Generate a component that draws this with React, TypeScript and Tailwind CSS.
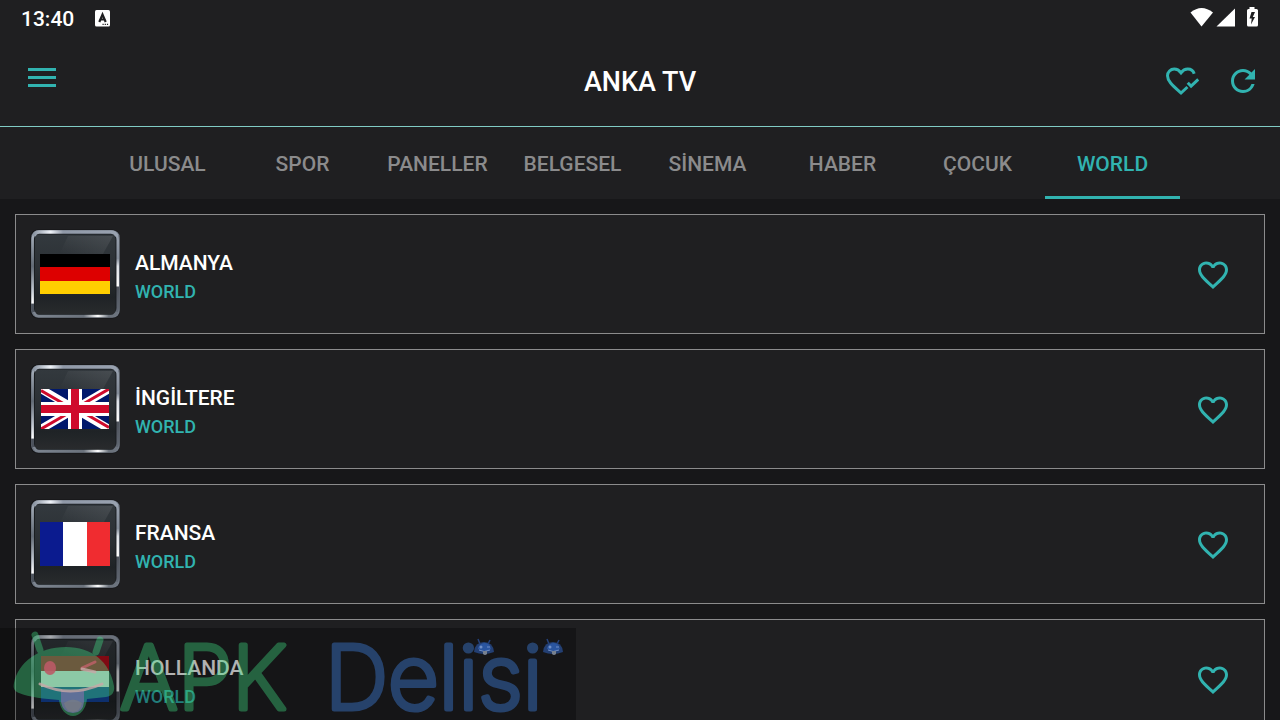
import { useId, useState } from 'react';
import type { ReactNode } from 'react';
import { MdFavorite, MdFavoriteBorder, MdRefresh } from 'react-icons/md';

type Country = 'de' | 'gb' | 'fr' | 'nl';

interface Channel {
  name: string;
  group: string;
  country: Country;
}

const TABS = ['ULUSAL', 'SPOR', 'PANELLER', 'BELGESEL', 'SİNEMA', 'HABER', 'ÇOCUK', 'WORLD'];

const CHANNELS: Channel[] = [
  { name: 'ALMANYA', group: 'WORLD', country: 'de' },
  { name: 'İNGİLTERE', group: 'WORLD', country: 'gb' },
  { name: 'FRANSA', group: 'WORLD', country: 'fr' },
  { name: 'HOLLANDA', group: 'WORLD', country: 'nl' },
];

const FLAGS: Record<Country, ReactNode> = {
  de: (
    <g shapeRendering="crispEdges">
      <path fill="#000" d="M10 25h70v13H10z" />
      <path fill="#dd0000" d="M10 38h70v14H10z" />
      <path fill="#ffce00" d="M10 52h70v13H10z" />
    </g>
  ),
  gb: (
    <svg x="11" y="25" width="68" height="40" viewBox="0 0 68 40">
      <path fill="#00186b" d="M0 0h68v40H0z" />
      <path stroke="#fff" strokeWidth="8" d="M0 0l68 40M68 0L0 40" />
      <path stroke="#cf0a2c" strokeWidth="3" d="M0 1.5l30 17.5M68 38.5L38 21M68 0L36 18.5M0 40l32-18.5" />
      <path stroke="#fff" strokeWidth="14" d="M34 0v40M0 20h68" />
      <path stroke="#cf0a2c" strokeWidth="8" d="M34 0v40M0 20h68" />
    </svg>
  ),
  fr: (
    <g shapeRendering="crispEdges">
      <path fill="#0b1b8f" d="M10 23h23v44H10z" />
      <path fill="#fff" d="M33 23h24v44H33z" />
      <path fill="#f02c30" d="M57 23h23v44H57z" />
    </g>
  ),
  nl: (
    <g shapeRendering="crispEdges">
      <path fill="#b80d1c" d="M11 22h68v15H11z" />
      <path fill="#fff" d="M11 37h68v16H11z" />
      <path fill="#14449c" d="M11 53h68v15H11z" />
    </g>
  ),
};

function ChannelLogo({ country }: { country: Country }) {
  const id = useId();

  return (
    <svg className="size-[90px] shrink-0" viewBox="0 0 90 90" fill="none" aria-hidden="true">
      <defs>
        <linearGradient id={`${id}-glass`} x1="0" y1="0" x2="0" y2="1">
          <stop offset="0" stopColor="#33393e" />
          <stop offset="0.5" stopColor="#2a2f33" />
          <stop offset="0.78" stopColor="#1f2326" />
          <stop offset="1" stopColor="#292b2d" />
        </linearGradient>
        <linearGradient id={`${id}-sheen`} x1="0" y1="1" x2="1" y2="0">
          <stop offset="0.3" stopColor="#fff" stopOpacity="0" />
          <stop offset="1" stopColor="#fff" stopOpacity="0.1" />
        </linearGradient>
        <linearGradient id={`${id}-top`} x1="0" x2="1">
          <stop offset="0" stopColor="#8b95a3" />
          <stop offset="0.2" stopColor="#f0f4fa" />
          <stop offset="0.35" stopColor="#9099a8" />
          <stop offset="1" stopColor="#99a2b0" />
        </linearGradient>
        <linearGradient id={`${id}-bottom`} x1="0" x2="1">
          <stop offset="0" stopColor="#7d8590" />
          <stop offset="0.6" stopColor="#6b727c" />
          <stop offset="0.77" stopColor="#fff" />
          <stop offset="0.9" stopColor="#6c737d" />
        </linearGradient>
        <linearGradient id={`${id}-left`} gradientUnits="userSpaceOnUse" x1="0" y1="6" x2="0" y2="84">
          <stop offset="0" stopColor="#a3acb8" />
          <stop offset="0.4" stopColor="#626b76" />
          <stop offset="0.7" stopColor="#c0c7d0" />
          <stop offset="0.87" stopColor="#fff" />
          <stop offset="0.89" stopColor="#4b515b" />
        </linearGradient>
        <linearGradient id={`${id}-right`} gradientUnits="userSpaceOnUse" x1="0" y1="6" x2="0" y2="84">
          <stop offset="0" stopColor="#99a2b0" />
          <stop offset="0.3" stopColor="#838c99" />
          <stop offset="0.4" stopColor="#e0e4ea" />
          <stop offset="0.65" stopColor="#fff" />
          <stop offset="0.67" stopColor="#4d525b" />
          <stop offset="1" stopColor="#606772" />
        </linearGradient>
      </defs>
      <rect x="0" y="0.500" width="90" height="89" rx="8" fill="#141517" />
      <rect x="2.500" y="2.500" width="86" height="85" rx="6" stroke="#6f7783" strokeWidth="2.500" />
      <rect x="4.500" y="5" width="81.500" height="80.500" rx="4" fill={`url(#${id}-glass)`} stroke="#191d20" />
      <path fill={`url(#${id}-sheen)`} d="M38 7h45l-18 32H23z" />
      <path stroke={`url(#${id}-left)`} strokeWidth="2.500" d="M6 4Q2.500 6 2.600 12V78Q2.500 83 6 86" />
      <path stroke={`url(#${id}-right)`} strokeWidth="2.500" d="M84 4Q88 6 87.700 12V78Q88 83 84 86" />
      <path stroke={`url(#${id}-top)`} strokeWidth="3.500" d="M4 7Q5 3 9 3H81Q85 3 87 7" />
      <path stroke={`url(#${id}-bottom)`} strokeWidth="2.500" d="M4 83Q5 87 9 87H81Q85 87 87 83" />
      {FLAGS[country]}
    </svg>
  );
}

function StatusBar() {
  return (
    <div className="flex h-9 shrink-0 items-center justify-between px-[21px]">
      <div className="flex items-center gap-[21px] pt-px">
        <span className="text-[21px] leading-6 font-medium">13:40</span>
        <svg className="h-[17px] w-[15px]" viewBox="0 0 15 17" aria-hidden="true">
          <rect width="15" height="16.500" rx="1.500" fill="#fff" />
          <path fill="none" stroke="#1f1f21" strokeWidth="2.200" d="M4.300 12L7.500 4.500L10.700 12M5.500 9.500h4" />
          <path fill="#1f1f21" d="M7.500 13.800h1.200v1.200H7.500zM9.700 13.800h1.200v1.200H9.700zM11.900 13.800h1.200v1.200h-1.200z" />
        </svg>
      </div>
      <svg className="mb-0.5 h-5 w-[69px]" viewBox="0 0 69 20" fill="#fff" aria-hidden="true">
        <path d="M0.500 5.500Q11.500-3.500 23 5.500L11.500 19.500z" />
        <path d="M26.500 19.500h18.500V1.500z" />
        <path
          fillRule="evenodd"
          d="M59.500 0h5v2h2q1.500 0 1.500 1.500v14.500q0 1.500-1.500 1.500h-8q-1.500 0-1.500-1.500V3.500Q57 2 58.500 2h1zM61.500 5l-2 6.500h2.200L61 17.500l4-7.500h-2.200L65 5z"
        />
      </svg>
    </div>
  );
}

function FavoriteListIcon() {
  return (
    <svg
      className="size-9"
      viewBox="0 0 24 24"
      fill="none"
      stroke="currentColor"
      strokeWidth="2"
      aria-hidden="true"
    >
      <path d="M20.800 7.200C20.200 5.200 18.500 4 16.500 4c-1.740 0-3.410 1-4.500 2.500C10.910 5 9.240 4 7.500 4 5 4 3 6 3 8.500c0 3.600 3.400 6.400 9 11.500l4.300-4" />
      <path d="M16.500 13.200l2.200 2.200 4.800-4.500" />
    </svg>
  );
}

// Small robot head sitting on the letters of the wordmark
function RobotDot({ x }: { x: number }) {
  return (
    <g transform={`translate(${x} 11)`}>
      <path stroke="#25427c" strokeWidth="1.500" d="M4 0l2 5M16 1l-2 4" />
      <path fill="#233f73" d="M0 13Q1 3 10 3T20 13Q10 17 0 13z" />
      <path fill="#2a55a0" d="M4 9Q6 4 11 4t6 6q-6 4-13 0z" />
      <circle cx="7" cy="8" r="1.500" fill="#6f8ec6" />
      <path stroke="#6f8ec6" d="M13 8h3M5 11q5 3 11 0" fill="none" />
      <path fill="#77808f" d="M9 12h4v3q-2 2-4 0z" />
    </g>
  );
}

function Watermark() {
  return (
    <div className="pointer-events-none absolute bottom-0 left-0 bg-black/30">
      <svg className="h-[92px] w-[576px] overflow-visible" viewBox="0 0 576 92" fill="none">
        <g opacity="0.34">
          <path stroke="#45f591" strokeWidth="7" strokeLinecap="round" d="M35 7l5 15" />
          <path stroke="#45f591" strokeWidth="7" strokeLinecap="round" d="M100 12l-4 12" />
          <path fill="#45f591" d="M14 55C18 35 38 19 66 19c26 0 44 15 48 39 1 6-2 10-8 11l-19 2c-1 10-7 17-14 17s-13-7-14-16c-14-1-30-3-40-7-5-2-6-5-5-10z" />
        </g>
        <path fill="#6f6fa0" fillOpacity="0.8" d="M61 62q12 3 23 0v12q-1 11-11 11t-12-11z" />
        <path fill="#7d7f80" fillOpacity="0.6" d="M64 75q9-7 18 0-2 9-9 9t-9-9z" />
        <ellipse cx="50" cy="40" rx="6" ry="7" fill="#bb5a66" fillOpacity="0.9" />
        <g stroke="#c8a8a8" strokeWidth="3" strokeLinecap="round" strokeOpacity="0.8">
          <path stroke="#c2606a" d="M95 34l-13 6" />
          <path d="M82 41l13 3M40 56q30 14 62 0" />
        </g>
        <g
          fontFamily="Inter, sans-serif"
          fontWeight="200"
          fontSize="88"
          strokeWidth="5"
          strokeLinejoin="round"
        >
          <text x="120" y="81" fill="#45f591" stroke="#45f591" opacity="0.34">
            APK
          </text>
          <text x="325" y="81" fill="#4591ff" stroke="#4591ff" opacity="0.36">
            Delisi
          </text>
        </g>
        <RobotDot x={474} />
        <RobotDot x={543} />
      </svg>
    </div>
  );
}

export default function App() {
  const [activeTab, setActiveTab] = useState('WORLD');
  const [favorites, setFavorites] = useState<string[]>([]);

  const toggleFavorite = (name: string) => {
    setFavorites((prev) =>
      prev.includes(name) ? prev.filter((item) => item !== name) : [...prev, name]
    );
  };

  return (
    <div className="relative flex h-screen flex-col overflow-hidden bg-[#171719] font-[Roboto,sans-serif] text-white">
      <div className="shrink-0 border-b border-[#80cbc4] bg-[#1f1f21]">
        <StatusBar />
        <header className="grid h-[90px] grid-cols-[1fr_auto_1fr] items-center px-7 text-[#31b3b0]">
          <button type="button" aria-label="Menü" className="mb-2 flex w-7 flex-col gap-[5px]">
            <span className="h-[3px] w-full bg-current" />
            <span className="h-[3px] w-full bg-current" />
            <span className="h-[3px] w-full bg-current" />
          </button>
          <h1 className="pt-0.5 text-[27px] leading-8 font-medium text-white">ANKA TV</h1>
          <div className="-mr-[9px] flex justify-end gap-[26px]">
            <button type="button" aria-label="Favoriler">
              <FavoriteListIcon />
            </button>
            <button type="button" aria-label="Yenile">
              <MdRefresh className="size-9" />
            </button>
          </div>
        </header>
      </div>

      {/* Categories */}
      <nav className="flex h-[72px] shrink-0 justify-center bg-[#1f1f21]">
        {TABS.map((tab) => (
          <button
            key={tab}
            type="button"
            onClick={() => setActiveTab(tab)}
            className={
              tab === activeTab
                ? 'w-[135px] border-b-[3px] border-[#31b3b0] pt-1.5 text-[21px] font-medium text-[#31b3b0]'
                : 'w-[135px] border-b-[3px] border-transparent pt-1.5 text-[21px] font-medium text-[#8b8b8c]'
            }
          >
            {tab}
          </button>
        ))}
      </nav>

      {/* Channels */}
      <ul className="flex flex-1 flex-col gap-[15px] overflow-hidden p-[15px]">
        {CHANNELS.map((channel) => (
          <li
            key={channel.name}
            className="flex h-[120px] shrink-0 items-center gap-[15px] border border-[#8b8b8c] bg-[#1f1f21] pr-[33px] pl-[14px]"
          >
            <ChannelLogo country={channel.country} />
            <div className="flex-1 pt-1 font-medium">
              <h2 className="text-[21px] leading-8">{channel.name}</h2>
              <p className="text-[18px] leading-[26px] text-[#31b3b0]">{channel.group}</p>
            </div>
            <button
              type="button"
              aria-label={`${channel.name} favori`}
              onClick={() => toggleFavorite(channel.name)}
              className="pt-0.5 text-[#31b3b0]"
            >
              {favorites.includes(channel.name) ? (
                <MdFavorite className="size-9" />
              ) : (
                <MdFavoriteBorder className="size-9" />
              )}
            </button>
          </li>
        ))}
      </ul>

      <Watermark />
    </div>
  );
}
